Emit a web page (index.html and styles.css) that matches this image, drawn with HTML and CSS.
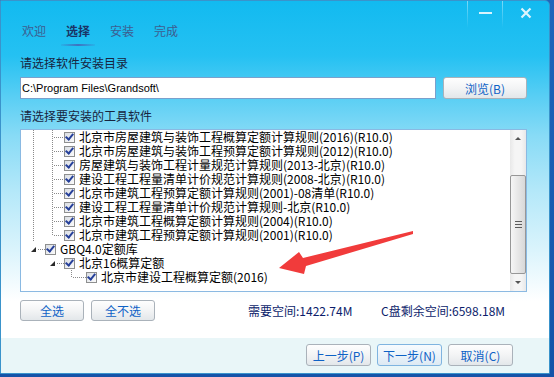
FILE: index.html
```html
<!DOCTYPE html>
<html lang="zh-CN">
<head>
  <meta charset="UTF-8">
  <title>安装向导</title>
  <link rel="stylesheet" href="styles.css">
</head>
<body>
  <div class="window">
    <!-- title bar: only the system buttons -->
    <div class="titlebar">
      <span class="sys-sep"></span>
      <span class="sys-btn sys-min"><span class="min-bar"></span></span>
      <span class="sys-sep"></span>
      <span class="sys-btn sys-close">
        <svg width="12" height="12" viewBox="0 0 12 12"><path d="M1.5 1.5 L10.5 10.5 M10.5 1.5 L1.5 10.5" stroke="#dcf4fd" stroke-width="2.2"/></svg>
      </span>
    </div>

    <ul class="tabs">
      <li class="tab">欢迎</li>
      <li class="tab active">选择</li>
      <li class="tab">安装</li>
      <li class="tab">完成</li>
    </ul>

    <div class="content">
      <div class="label">请选择软件安装目录</div>
      <div class="path-row">
        <div class="path-input">C:\Program Files\Grandsoft\</div>
        <button class="btn browse">浏览(B)</button>
      </div>

      <div class="label label-tree">请选择要安装的工具软件</div>
      <div class="tree">
        <div class="tree-rows">
          <div class="row"><span class="pipe"></span><span class="tee"></span><span class="cb"></span>北京市房屋建筑与装饰工程概算定额计算规则(2016)(R10.0)</div>
          <div class="row"><span class="pipe"></span><span class="tee"></span><span class="cb"></span>北京市房屋建筑与装饰工程预算定额计算规则(2012)(R10.0)</div>
          <div class="row"><span class="pipe"></span><span class="tee"></span><span class="cb"></span>房屋建筑与装饰工程计量规范计算规则(2013-北京)(R10.0)</div>
          <div class="row"><span class="pipe"></span><span class="tee"></span><span class="cb"></span>建设工程工程量清单计价规范计算规则(2008-北京)(R10.0)</div>
          <div class="row"><span class="pipe"></span><span class="tee"></span><span class="cb"></span>北京市建筑工程预算定额计算规则(2001)-08清单(R10.0)</div>
          <div class="row"><span class="pipe"></span><span class="tee"></span><span class="cb"></span>建设工程工程量清单计价规范计算规则-北京(R10.0)</div>
          <div class="row"><span class="pipe"></span><span class="tee"></span><span class="cb"></span>北京市建筑工程概算定额计算规则(2004)(R10.0)</div>
          <div class="row"><span class="pipe"></span><span class="elbow"></span><span class="cb"></span>北京市建筑工程预算定额计算规则(2001)(R10.0)</div>
          <div class="row"><span class="exp"></span><span class="cb"></span>GBQ4.0定额库</div>
          <div class="row"><span class="blank"></span><span class="exp"></span><span class="cb"></span>北京16概算定额</div>
          <div class="row"><span class="blank"></span><span class="blank"></span><span class="elbow deep"></span><span class="cb"></span>北京市建设工程概算定额(2016)</div>
        </div>
        <div class="scroll">
          <span class="sb-btn sb-up"></span>
          <div class="track">
            <div class="thumb"><span class="grip"></span></div>
          </div>
          <span class="sb-btn sb-down"></span>
        </div>
      </div>

      <div class="actions">
        <button class="btn small">全选</button>
        <button class="btn small">全不选</button>
        <span class="stat stat-need">需要空间:1422.74M</span>
        <span class="stat">C盘剩余空间:6598.18M</span>
      </div>
    </div>

    <div class="footer">
      <button class="btn step">上一步(P)</button>
      <button class="btn step default">下一步(N)</button>
      <button class="btn step">取消(C)</button>
    </div>

    <!-- red annotation arrow drawn over the list -->
    <svg class="pointer" width="550" height="374" viewBox="0 0 550 374">
      <polygon points="413,231 303,258 299,252 279,268 304,274 306,266 413,234" fill="#f13b3b"/>
    </svg>
  </div>
</body>
</html>
```

FILE: styles.css
```css
/* Global */
body {
  margin: 0;
  height: 100vh;
  overflow: hidden;
  background: linear-gradient(180deg, #1d66bb, #1553a8);
  font-family: "Noto Sans CJK SC", sans-serif;
  font-size: 12px;
}

/* Window */
.window {
  position: relative;
  width: 550px;
  height: 374px;
  box-sizing: border-box;
  border: 1px solid #3a93cb;
  border-top-right-radius: 5px;
  background: linear-gradient(180deg, #12baf0 0px, #25c1f2 55px, #58cef4 95px, #88dbf6 135px, #b4e8f9 190px, #dbf4fc 250px, #ffffff 300px);
  display: flex;
  flex-direction: column;
  overflow: hidden;
}

.titlebar {
  flex: none;
  height: 20px;
  display: flex;
  justify-content: flex-end;
  align-items: flex-start;
}

.sys-sep {
  width: 1px;
  height: 27px;
  background: linear-gradient(rgba(255, 255, 255, 0.45), rgba(255, 255, 255, 0));
}

.sys-btn {
  display: flex;
  justify-content: center;
  height: 20px;
}

.sys-min {
  width: 34px;
  padding-top: 11px;
  box-sizing: border-box;
}

.min-bar {
  width: 13px;
  height: 2px;
  background: #d9f3fd;
}

.sys-close {
  width: 46px;
  padding-top: 6px;
  box-sizing: border-box;
}

/* Tabs */
.tabs {
  flex: none;
  list-style: none;
  margin: 0;
  padding: 2px 0 0 16px;
  display: flex;
}

.tab {
  padding: 0 5px 7px;
  margin-right: 10px;
  line-height: 16px;
  color: #3d5d90;
}

.tab.active {
  color: #1a3466;
  font-weight: bold;
  background: linear-gradient(90deg, rgba(63, 114, 191, 0.15), #3f72bf 50%, rgba(63, 114, 191, 0.15)) left bottom / 100% 2px no-repeat;
}

/* Content */
.content {
  padding: 0 22px 0 19px;
}

.label {
  margin-top: 9px;
  line-height: 16px;
  color: #17253f;
}

.path-row {
  display: flex;
  gap: 7px;
  margin-top: 6px;
}

.path-input {
  width: 416px;
  height: 22px;
  box-sizing: border-box;
  border: 1px solid #7aa0cc;
  background: #fff;
  padding: 0 1px;
  display: flex;
  align-items: center;
  font: 11px "Liberation Sans", sans-serif;
  color: #000;
}

.btn {
  height: 22px;
  box-sizing: border-box;
  border: 1px solid #aab2ba;
  border-radius: 3px;
  background: linear-gradient(#fefefe, #f3f4f5 50%, #e3e7ea);
  color: #0e62c6;
  font: 12px "Noto Sans CJK SC", sans-serif;
  padding: 0;
  display: flex;
  align-items: center;
  justify-content: center;
}

.browse {
  width: 84px;
}

/* Tree */
.tree {
  margin-top: 5px;
  height: 163px;
  box-sizing: border-box;
  border: 1px solid #8ab9e2;
  background: #fff;
  display: flex;
}

.tree-rows {
  flex: 1;
}

.row {
  display: flex;
  align-items: center;
  height: 14px;
  line-height: 14px;
  white-space: nowrap;
  color: #000;
}

.pipe,
.blank {
  flex: none;
  width: 19px;
  height: 14px;
}

.tee,
.elbow,
.exp {
  flex: none;
  width: 24px;
  height: 14px;
}

.pipe {
  background: repeating-linear-gradient(#8a8a8a 0 1px, transparent 1px 2px) 12px 0 / 1px 14px no-repeat;
}

.tee {
  background:
    repeating-linear-gradient(#8a8a8a 0 1px, transparent 1px 2px) 12px 0 / 1px 14px no-repeat,
    repeating-linear-gradient(90deg, #8a8a8a 0 1px, transparent 1px 2px) 14px 7px / 10px 1px no-repeat;
}

.elbow {
  background:
    repeating-linear-gradient(#8a8a8a 0 1px, transparent 1px 2px) 12px 0 / 1px 8px no-repeat,
    repeating-linear-gradient(90deg, #8a8a8a 0 1px, transparent 1px 2px) 14px 7px / 10px 1px no-repeat;
}

.elbow.deep {
  width: 27px;
  background-size: 1px 8px, 13px 1px;
}

.exp {
  box-sizing: border-box;
  padding-left: 10px;
  display: flex;
  align-items: center;
  background: repeating-linear-gradient(90deg, #8a8a8a 0 1px, transparent 1px 2px) 17px 7px / 7px 1px no-repeat;
}

.exp::before {
  content: "";
  border-left: 5px solid transparent;
  border-bottom: 5px solid #2a2a2a;
  margin-top: 1px;
}

.cb {
  flex: none;
  width: 11px;
  height: 11px;
  box-sizing: border-box;
  margin-right: 4px;
  border: 1px solid #8e8f8f;
  background: linear-gradient(135deg, #d9dde3, #fbfbfb);
  display: flex;
  align-items: center;
  justify-content: center;
}

.cb::after {
  content: "";
  width: 3px;
  height: 6px;
  border: solid #26409a;
  border-width: 0 2px 2px 0;
  transform: translateY(-1px) rotate(40deg);
}

/* Scrollbar */
.scroll {
  flex: none;
  width: 16px;
  display: flex;
  flex-direction: column;
  background: linear-gradient(90deg, #e8e8e8, #f5f5f5 30%, #f5f5f5 70%, #e8e8e8);
}

.sb-btn {
  flex: none;
  height: 17px;
  display: flex;
  align-items: center;
  justify-content: center;
}

.sb-up::before,
.sb-down::before {
  content: "";
  border-left: 3px solid transparent;
  border-right: 3px solid transparent;
}

.sb-up::before {
  border-bottom: 3px solid #555;
}

.sb-down::before {
  border-top: 3px solid #555;
}

.track {
  flex: 1;
  padding-top: 28px;
}

.thumb {
  height: 99px;
  box-sizing: border-box;
  border: 1px solid #979797;
  border-radius: 2px;
  background: linear-gradient(90deg, #f6f6f6, #e7e7e7 50%, #d8d8d8);
  display: flex;
  align-items: center;
  justify-content: center;
}

.grip {
  width: 7px;
  height: 7px;
  background: repeating-linear-gradient(#5c5c5c 0 1px, transparent 1px 3px);
}

/* Bottom actions */
.actions {
  display: flex;
  align-items: center;
  gap: 7px;
  margin-top: 8px;
}

.btn.small {
  width: 64px;
  height: 21px;
}

.stat {
  color: #0c1d6b;
  line-height: 16px;
}

.stat-need {
  width: 126px;
  margin-left: 86px;
}

/* Footer */
.footer {
  flex: none;
  margin-top: auto;
  height: 35px;
  box-sizing: border-box;
  padding: 6px 36px 0 0;
  background: #e9f6f8;
  display: flex;
  justify-content: flex-end;
  gap: 6px;
}

.btn.step {
  width: 65px;
}

.btn.default {
  border-color: #7fb4e0;
  background: linear-gradient(#f7fbfe, #eaf3fa 50%, #dde9f3);
}

/* Annotation */
.pointer {
  position: absolute;
  left: -1px;
  top: -1px;
  pointer-events: none;
}
```
